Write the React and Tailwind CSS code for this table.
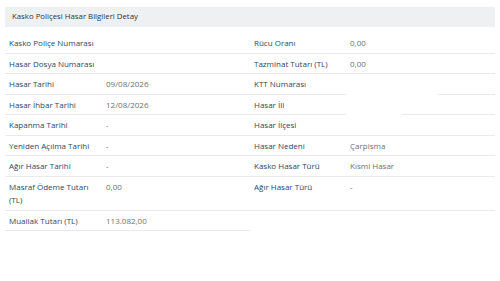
const rows = [
  [
    { label: "Kasko Poliçe Numarası", value: "" },
    { label: "Rücu Oranı", value: "0,00" },
  ],
  [
    { label: "Hasar Dosya Numarası", value: "" },
    { label: "Tazminat Tutarı (TL)", value: "0,00" },
  ],
  [
    { label: "Hasar Tarihi", value: "09/08/2026" },
    { label: "KTT Numarası", value: "", gap: "ml-[92px]" },
  ],
  [
    { label: "Hasar İhbar Tarihi", value: "12/08/2026" },
    { label: "Hasar İli", value: "", gap: "ml-[56px]" },
  ],
  [
    { label: "Kapanma Tarihi", value: "-" },
    { label: "Hasar İlçesi", value: "" },
  ],
  [
    { label: "Yeniden Açılma Tarihi", value: "-" },
    { label: "Hasar Nedeni", value: "Çarpisma" },
  ],
  [
    { label: "Ağır Hasar Tarihi", value: "-" },
    { label: "Kasko Hasar Türü", value: "Kısmi Hasar" },
  ],
  [
    { label: "Masraf Ödeme Tutarı (TL)", value: "0,00" },
    { label: "Ağır Hasar Türü", value: "-" },
  ],
  [{ label: "Muallak Tutarı (TL)", value: "113.082,00" }, null],
];

const Cell = ({ item }) => {
  if (!item) return <><div /><div /></>;
  return (
    <>
      <div className="border-b border-[#e8eaed] pl-[4px] pr-[1px] py-[3px] text-[#2b4766] leading-[13.5px]">
        {item.label}
      </div>
      <div className="flex flex-col">
        <div className="pl-[4px] py-[3px] text-[#6f6f6f] leading-[13.5px] flex-1">
          {item.value}
        </div>
        <div className={`border-b border-[#e8eaed] ${item.gap || ""}`} />
      </div>
    </>
  );
};

export default function App() {
  return (
    <div className="w-[500px] h-[281px] bg-white px-[5px] pt-[7px] text-[8px] font-['Open_Sans',sans-serif]">
      <div className="h-[20px] bg-[#eef0f2] flex items-center pl-[7px] text-[7.8px] text-[#333]">
        Kasko Poliçesi Hasar Bilgileri Detay
      </div>
      <div className="mt-[6px] grid grid-cols-[97px_148px_96px_149px]">
        {rows.map((r, i) => (
          <div key={i} className="contents">
            <Cell item={r[0]} />
            <Cell item={r[1]} />
          </div>
        ))}
      </div>
    </div>
  );
}
